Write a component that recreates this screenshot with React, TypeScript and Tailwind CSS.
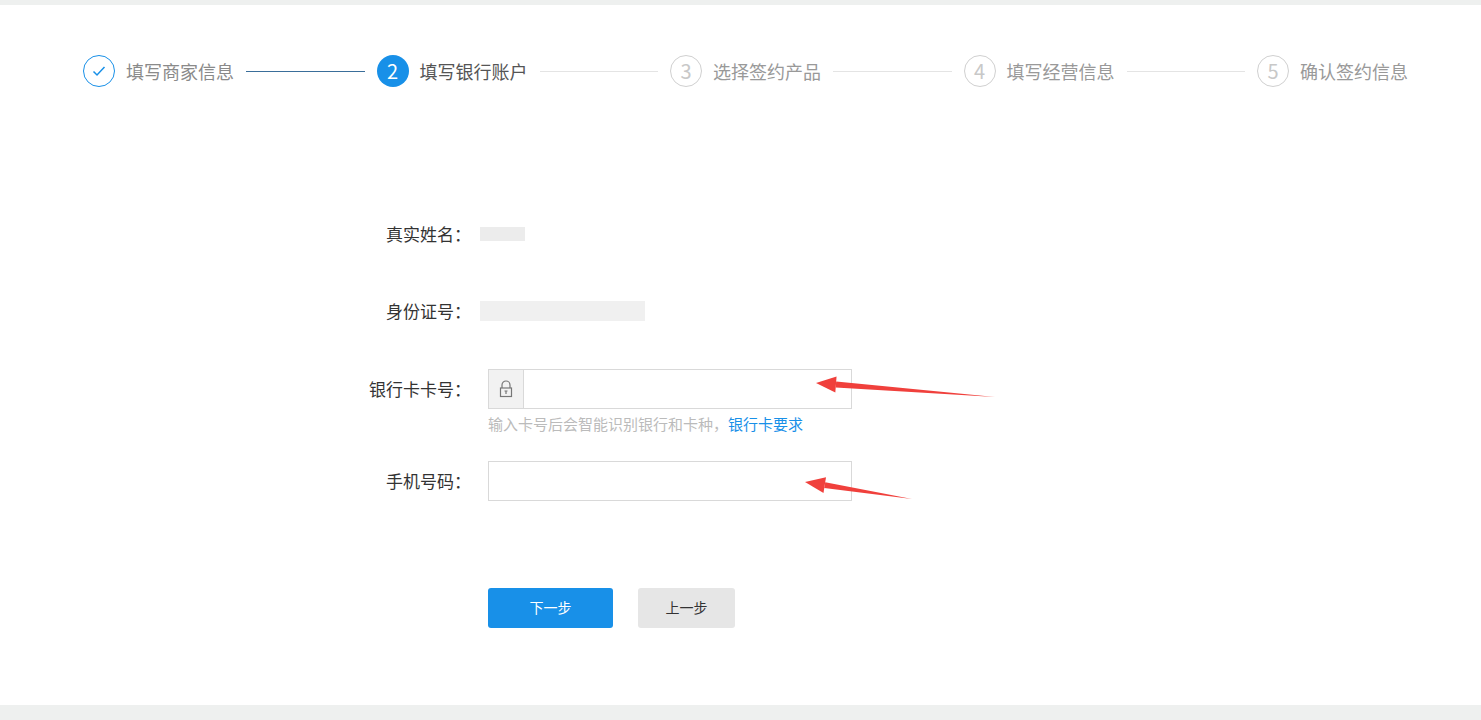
import React from "react";

const font = { fontFamily: '"Microsoft YaHei", "Noto Sans CJK SC", sans-serif' };

const steps = ["填写商家信息", "填写银行账户", "选择签约产品", "填写经营信息", "确认签约信息"];

function StepIcon({ i }: { i: number }) {
  if (i === 0)
    return (
      <div className="w-8 h-8 rounded-full border border-[#1890e8] flex items-center justify-center shrink-0">
        <svg width="16" height="16" viewBox="0 0 16 16" fill="none" stroke="#1890e8" strokeWidth="1.5">
          <path d="M2.5 8.5l3.5 3.5 7.5-8" />
        </svg>
      </div>
    );
  if (i === 1)
    return (
      <div className="w-8 h-8 rounded-full bg-[#1890e8] text-white text-[20px] flex items-center justify-center shrink-0">2</div>
    );
  return (
    <div className="w-8 h-8 rounded-full border border-[#d0d0d0] text-[#c8c8c8] text-[20px] flex items-center justify-center shrink-0">
      {i + 1}
    </div>
  );
}

function Arrow({ x1, y1, x2, y2 }: { x1: number; y1: number; x2: number; y2: number }) {
  const a = Math.atan2(y2 - y1, x2 - x1);
  const L = 20, W = 8;
  const bx = x2 - L * Math.cos(a), by = y2 - L * Math.sin(a);
  const px = -Math.sin(a), py = Math.cos(a);
  return (
    <g fill="#f0403c">
      <polygon points={`${x1},${y1} ${bx + px * 3},${by + py * 3} ${bx - px * 3},${by - py * 3}`} />
      <polygon points={`${x2},${y2} ${bx + px * W},${by + py * W} ${bx - px * W},${by - py * W}`} />
    </g>
  );
}

export default function App() {
  return (
    <div className="relative w-[1481px] h-[720px] bg-[#eef0ef] overflow-hidden" style={font}>
      <div className="mt-[5px] h-[700px] bg-white">
        <div className="flex items-center pl-[83px] pr-[73px] pt-[50px]">
          {steps.map((s, i) => (
            <React.Fragment key={s}>
              <div className="flex items-center gap-[11px] shrink-0">
                <StepIcon i={i} />
                <span className={`text-[18px] ${i === 1 ? "text-[#555]" : i === 0 ? "text-[#8a8a8a]" : "text-[#999]"}`}>{s}</span>
              </div>
              {i < 4 && <div className={`flex-1 h-px mx-[12px] ${i === 0 ? "bg-[#3a6e9a]" : "bg-[#e4e4e4]"}`} />}
            </React.Fragment>
          ))}
        </div>

        <div className="mt-[134px] flex flex-col text-[17px] text-[#333]">
          <div className="flex items-center h-[20px] mt-[3px]">
            <span className="w-[471px] text-right">真实姓名：</span>
            <span className="ml-[9px] w-[45px] h-[14px] bg-[#ececec]" />
          </div>
          <div className="flex items-center h-[30px] mt-[52px]">
            <span className="w-[471px] text-right">身份证号：</span>
            <span className="ml-[9px] w-[165px] h-[20px] bg-[#f0f0f0]" />
          </div>
          <div className="flex items-center mt-[43px]">
            <span className="w-[471px] text-right">银行卡卡号：</span>
            <div className="ml-[17px] w-[364px] h-[40px] border border-[#d9d9d9] flex">
              <div className="w-[35px] bg-[#f2f2f2] border-r border-[#d9d9d9] flex items-center justify-center">
                <svg width="14" height="18" viewBox="0 0 14 18" fill="none" stroke="#777" strokeWidth="1.2">
                  <path d="M3 8V5a4 4 0 0 1 8 0v3" />
                  <rect x="1.5" y="8" width="11" height="8.5" />
                  <path d="M7 11v3M5.5 11h3" />
                </svg>
              </div>
            </div>
          </div>
          <div className="ml-[488px] mt-[4px] text-[15px] text-[#bbb]">
            输入卡号后会智能识别银行和卡种，<span className="text-[#1890e8]">银行卡要求</span>
          </div>
          <div className="flex items-center mt-[25px]">
            <span className="w-[471px] text-right">手机号码：</span>
            <div className="ml-[17px] w-[364px] h-[40px] border border-[#d9d9d9]" />
          </div>
          <div className="flex ml-[488px] mt-[87px] gap-[25px] text-[14px]">
            <button className="w-[125px] h-[40px] rounded-[3px] bg-[#1890e8] text-white">下一步</button>
            <button className="w-[97px] h-[40px] rounded-[3px] bg-[#e6e6e6] text-[#333]">上一步</button>
          </div>
        </div>
      </div>
      <svg className="absolute left-0 top-0 pointer-events-none" width="1481" height="720">
        <Arrow x1={995} y1={397} x2={816} y2={383} />
        <Arrow x1={912} y1={499} x2={805} y2={482} />
      </svg>
    </div>
  );
}
